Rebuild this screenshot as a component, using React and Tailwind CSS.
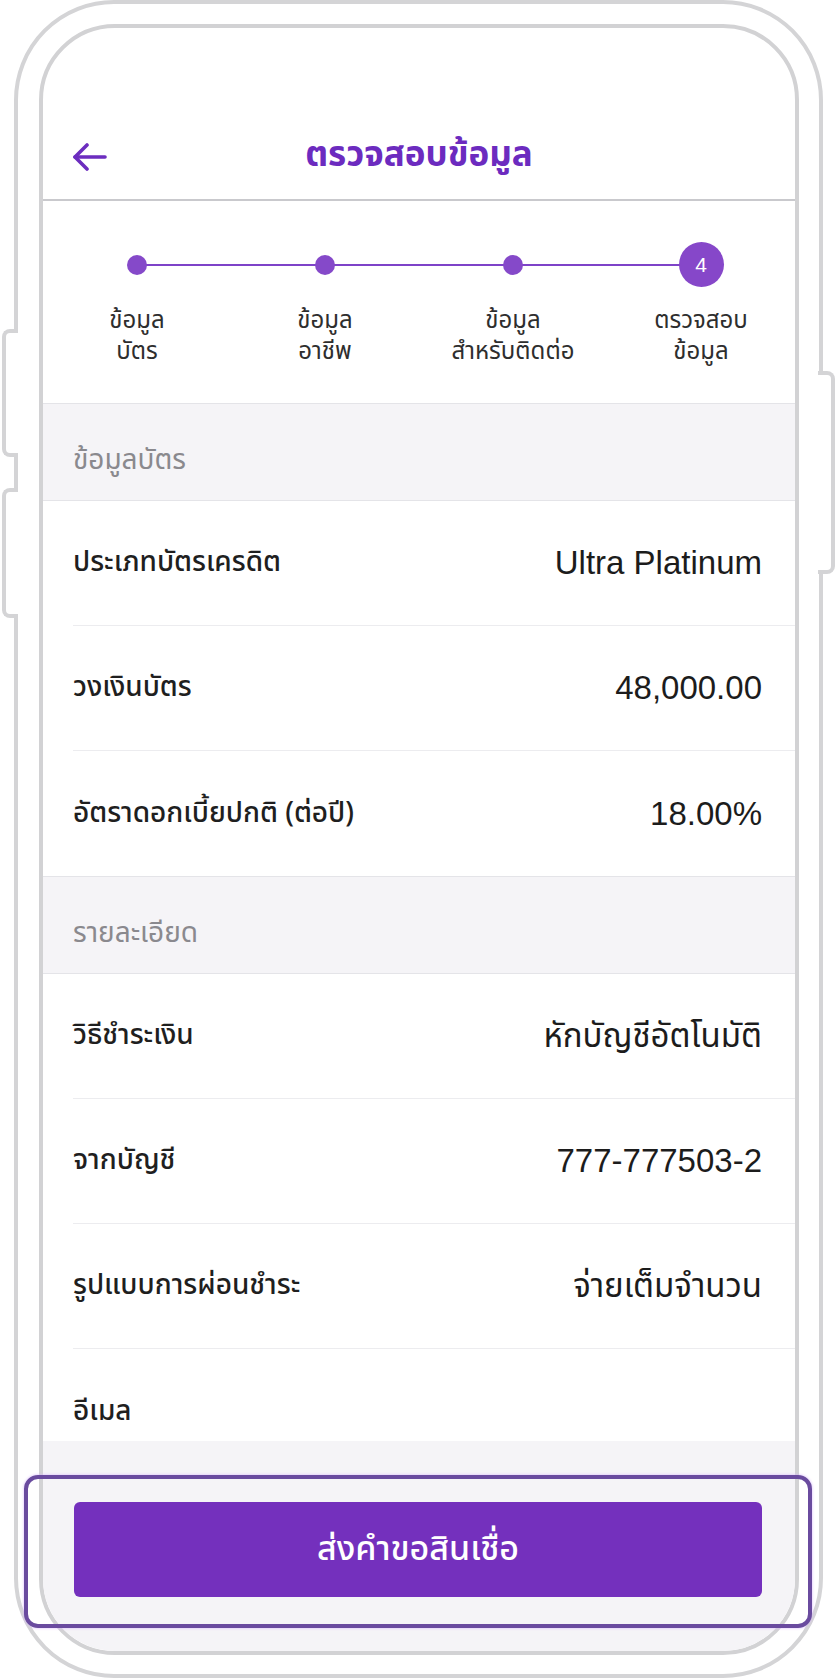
const THAI = "font-['Noto_Sans_Thai','Noto_Sans','Liberation_Sans',sans-serif]"

const STEPS = [
  { lines: ["ข้อมูล", "บัตร"] },
  { lines: ["ข้อมูล", "อาชีพ"] },
  { lines: ["ข้อมูล", "สำหรับติดต่อ"] },
  { lines: ["ตรวจสอบ", "ข้อมูล"] },
]

const CARD_ROWS = [
  { label: "ประเภทบัตรเครดิต", value: "Ultra Platinum" },
  { label: "วงเงินบัตร", value: "48,000.00" },
  { label: "อัตราดอกเบี้ยปกติ (ต่อปี)", value: "18.00%" },
]

const DETAIL_ROWS = [
  { label: "วิธีชำระเงิน", value: "หักบัญชีอัตโนมัติ" },
  { label: "จากบัญชี", value: "777-777503-2" },
  { label: "รูปแบบการผ่อนชำระ", value: "จ่ายเต็มจำนวน" },
  { label: "อีเมล", value: "" },
]

const SectionTitle = ({ children }) => (
  <div className="h-[98px] border-y border-[#e4e4e8] bg-[#f5f4f7] pl-[30px] pt-[39px]">
    <p className={`${THAI} text-[28px] leading-[36px] text-[#8a898e]`}>{children}</p>
  </div>
)

const Row = ({ label, value, last }) => (
  <div
    className={`ml-[30px] flex h-[125px] shrink-0 items-center justify-between pr-[33px] ${
      last ? "" : "border-b border-[#ececef]"
    }`}
  >
    <span className={`${THAI} text-[28px] font-medium text-[#1f1f1f]`}>{label}</span>
    <span className="font-['Liberation_Sans','Noto_Sans_Thai',sans-serif] text-[33px] text-[#1c1c1c]">
      {value}
    </span>
  </div>
)

const Stepper = () => (
  <div className="relative h-[202px] pt-[41px]">
    <div className="absolute top-[63px] left-[94px] h-[2px] w-[564px] bg-[#7e43c8]" />
    <div className="grid grid-cols-4">
      {STEPS.map((step, i) => (
        <div key={i} className="flex flex-col items-center">
          <div className="flex h-[45px] items-center justify-center">
            {i === 3 ? (
              <div className="relative flex h-[45px] w-[45px] items-center justify-center rounded-full bg-[#8647c9] font-['Liberation_Sans',sans-serif] text-[21px] text-white">
                4
              </div>
            ) : (
              <div className="relative h-[20px] w-[20px] rounded-full bg-[#8549c9]" />
            )}
          </div>
          <div className={`${THAI} mt-[19px] text-center text-[24px] leading-[31px] text-[#2e2e2e]`}>
            {step.lines.map((line) => (
              <div key={line}>{line}</div>
            ))}
          </div>
        </div>
      ))}
    </div>
  </div>
)

export default function App() {
  return (
    <div className="relative h-[1680px] w-[837px] overflow-hidden bg-white">
      {/* side buttons */}
      <div className="absolute top-[329px] left-[2px] h-[128px] w-[16px] rounded-l-[8px] border-y-[4px] border-l-[4px] border-[#d4d4d6] bg-white" />
      <div className="absolute top-[488px] left-[2px] h-[130px] w-[16px] rounded-l-[8px] border-y-[4px] border-l-[4px] border-[#d4d4d6] bg-white" />
      <div className="absolute top-[371px] right-[2px] h-[203px] w-[17px] rounded-r-[8px] border-y-[4px] border-r-[4px] border-[#d4d4d6] bg-white" />

      <div className="ml-[14px] h-[1678px] w-[809px] rounded-[100px] border-4 border-[#d4d4d6] pt-[20px] pr-[20px] pb-[19px] pl-[21px]">
        <div className="h-full w-full overflow-hidden rounded-[76px] border-4 border-[#d2d2d4] bg-white">
          <div className="relative flex h-full flex-col overflow-hidden">
            {/* header */}
            <div className="relative flex h-[173px] shrink-0 items-start justify-center border-b-2 border-[#c9c9cd] pt-[106px]">
              <svg
                className="absolute top-[115px] left-[30px]"
                width="34"
                height="28"
                viewBox="0 0 34 28"
                fill="none"
                stroke="#6c2dbf"
                strokeWidth="3.6"
                strokeLinecap="round"
                strokeLinejoin="round"
              >
                <path d="M14 2 L2 14 L14 26" />
                <path d="M2 14 H32" />
              </svg>
              <h1 className={`${THAI} text-[35px] leading-[44px] font-bold text-[#6c2bbf]`}>
                ตรวจสอบข้อมูล
              </h1>
            </div>

            <Stepper />

            <SectionTitle>ข้อมูลบัตร</SectionTitle>
            {CARD_ROWS.map((row, i) => (
              <Row key={row.label} {...row} last={i === CARD_ROWS.length - 1} />
            ))}

            <SectionTitle>รายละเอียด</SectionTitle>
            {DETAIL_ROWS.map((row, i) => (
              <Row key={row.label} {...row} last={i === DETAIL_ROWS.length - 1} />
            ))}

            {/* bottom bar */}
            <div className="absolute right-0 bottom-0 left-0 h-[210px] bg-[#f5f4f7] pt-[61px] pr-[33px] pl-[31px]">
              <button
                type="button"
                className={`${THAI} flex h-[95px] w-full items-center justify-center rounded-[6px] bg-[#7430bd] text-[34px] font-medium text-white`}
              >
                ส่งคำขอสินเชื่อ
              </button>
            </div>
          </div>
        </div>
      </div>

      {/* highlight around action */}
      <div className="absolute top-[1475px] left-[24px] h-[153px] w-[788px] rounded-[14px] border-[4px] border-[#6a4b9f] shadow-[0_0_3px_#d6b3ff]" />
    </div>
  )
}
